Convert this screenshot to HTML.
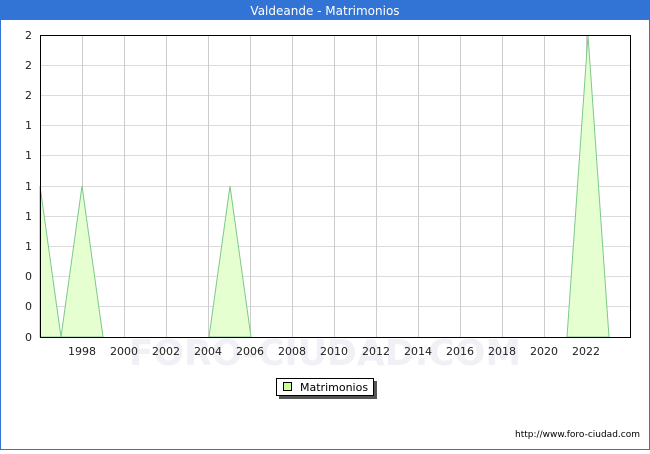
<!DOCTYPE html>
<html><head><style>
body{margin:0;width:650px;height:450px;overflow:hidden;font-family:"DejaVu Sans","Liberation Sans",sans-serif;}
</style></head><body>
<svg width="650" height="450" xmlns="http://www.w3.org/2000/svg" font-family="DejaVu Sans, Liberation Sans, sans-serif">
<rect x="0" y="0" width="650" height="450" fill="#fff"/>
<rect x="0.5" y="0.5" width="649" height="449" fill="none" stroke="#3273d6"/>
<rect x="0" y="0" width="650" height="20" fill="#3273d6"/>
<text x="325" y="15" fill="#fff" font-size="12" text-anchor="middle">Valdeande - Matrimonios</text>
<text x="325" y="365" fill="#f0f0f6" font-size="36" text-anchor="middle" font-weight="bold">FORO-CIUDAD.COM</text>
<g stroke="#dcdcdc" stroke-width="1">
<line x1="40" y1="65.5" x2="630" y2="65.5"/><line x1="40" y1="95.5" x2="630" y2="95.5"/><line x1="40" y1="125.5" x2="630" y2="125.5"/><line x1="40" y1="155.5" x2="630" y2="155.5"/><line x1="40" y1="186.5" x2="630" y2="186.5"/><line x1="40" y1="216.5" x2="630" y2="216.5"/><line x1="40" y1="246.5" x2="630" y2="246.5"/><line x1="40" y1="276.5" x2="630" y2="276.5"/><line x1="40" y1="306.5" x2="630" y2="306.5"/>
</g>
<g stroke="#cccccc" stroke-width="1">
<line x1="82.5" y1="35" x2="82.5" y2="337"/><line x1="124.5" y1="35" x2="124.5" y2="337"/><line x1="166.5" y1="35" x2="166.5" y2="337"/><line x1="208.5" y1="35" x2="208.5" y2="337"/><line x1="250.5" y1="35" x2="250.5" y2="337"/><line x1="292.5" y1="35" x2="292.5" y2="337"/><line x1="334.5" y1="35" x2="334.5" y2="337"/><line x1="376.5" y1="35" x2="376.5" y2="337"/><line x1="418.5" y1="35" x2="418.5" y2="337"/><line x1="460.5" y1="35" x2="460.5" y2="337"/><line x1="502.5" y1="35" x2="502.5" y2="337"/><line x1="544.5" y1="35" x2="544.5" y2="337"/><line x1="586.5" y1="35" x2="586.5" y2="337"/>
</g>
<g fill="#e6ffd0" stroke="#7cc98c" stroke-width="1">
<polygon points="40,186 61,337 40,337"/>
<polygon points="61,337 82,186 103,337"/>
<polygon points="209,337 230,186 251,337"/>
<polygon points="567,337 588,35 609,337"/>
</g>
<rect x="40.5" y="35.5" width="590" height="302" fill="none" stroke="#000"/>
<g font-size="11" fill="#222" text-anchor="end">
<text x="32" y="39">2</text><text x="32" y="69">2</text><text x="32" y="99">2</text><text x="32" y="129">1</text><text x="32" y="159">1</text><text x="32" y="190">1</text><text x="32" y="220">1</text><text x="32" y="250">1</text><text x="32" y="280">0</text><text x="32" y="310">0</text><text x="32" y="341">0</text>
</g>
<g font-size="11" fill="#222" text-anchor="middle">
<text x="82" y="355">1998</text><text x="124" y="355">2000</text><text x="166" y="355">2002</text><text x="208" y="355">2004</text><text x="250" y="355">2006</text><text x="292" y="355">2008</text><text x="334" y="355">2010</text><text x="376" y="355">2012</text><text x="418" y="355">2014</text><text x="460" y="355">2016</text><text x="502" y="355">2018</text><text x="544" y="355">2020</text><text x="586" y="355">2022</text>
</g>
<rect x="279" y="381" width="98" height="18" fill="#555"/>
<rect x="276.5" y="378.5" width="97" height="17" fill="#fff" stroke="#000"/>
<rect x="283.5" y="382.5" width="8" height="8" fill="#ccff99" stroke="#000"/>
<text x="300" y="391" font-size="11" fill="#000">Matrimonios</text>
<text x="640" y="437" font-size="9" fill="#000" text-anchor="end">http://www.foro-ciudad.com</text>
</svg>
</body></html>
